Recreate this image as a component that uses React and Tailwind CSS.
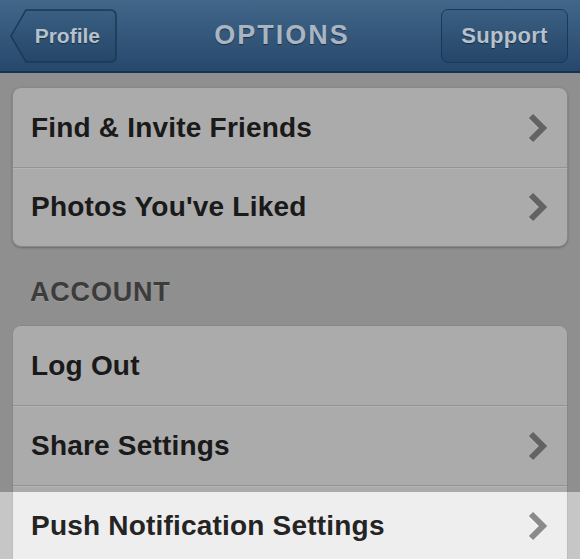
const font = { fontFamily: '"Liberation Sans", Arial, sans-serif' };

function Chevron() {
  return (
    <svg width="20" height="30" viewBox="0 0 20 30" className="shrink-0">
      <polyline points="3,3 15,15 3,27" fill="none" stroke="#f4f4f4" strokeWidth="6" transform="translate(-1,1)" />
      <polyline points="3,3 15,15 3,27" fill="none" stroke="#8a8a8a" strokeWidth="6" />
    </svg>
  );
}

function Row({ label, arrow = true, last = false, h = "h-[80px]" }) {
  return (
    <div className={`${h} flex items-center justify-between pl-[18px] pr-[19px] ${last ? "" : "border-b border-[#cdcdcd] shadow-[0_1px_0_#fafafa]"}`}>
      <span className="text-[28px] font-bold text-[#242424] tracking-[0.2px]">{label}</span>
      {arrow && <Chevron />}
    </div>
  );
}

export default function App() {
  return (
    <div className="w-[580px] h-[559px] overflow-hidden bg-[#c6c6c6]" style={font}>
      {/* Header */}
      <header className="h-[73px] flex items-center justify-between px-[10px] bg-gradient-to-b from-[#426789] to-[#26486c] border-b-2 border-[#15324f]">
        <button className="relative w-[107px] h-[54px] flex items-center justify-end pr-[17px]">
          <svg className="absolute inset-0" width="107" height="54" viewBox="0 0 107 54">
            <defs>
              <linearGradient id="bb" x1="0" y1="0" x2="0" y2="1">
                <stop offset="0" stopColor="#3a5f82" />
                <stop offset="1" stopColor="#254668" />
              </linearGradient>
            </defs>
            <path d="M16 1 H100 Q106 1 106 7 V47 Q106 53 100 53 H16 L1 27 Z" fill="url(#bb)" stroke="#1a3857" strokeWidth="1.5" />
          </svg>
          <span className="relative text-[21px] font-bold text-[#b7c1cd] [text-shadow:0_1px_1px_rgba(0,0,0,0.45)]">Profile</span>
        </button>
        <h1 className="text-[27px] font-bold tracking-[2px] text-[#aab5c3] [text-shadow:0_1px_1px_rgba(0,0,0,0.45)] pl-[6px]">OPTIONS</h1>
        <button className="w-[127px] h-[54px] mr-[2px] rounded-[7px] border-[1.5px] border-[#1a3857] bg-gradient-to-b from-[#3a5f82] to-[#254668] flex items-center justify-center">
          <span className="text-[22px] font-bold tracking-[0.3px] text-[#b7c1cd] [text-shadow:0_1px_1px_rgba(0,0,0,0.45)]">Support</span>
        </button>
      </header>

      {/* Content */}
      <div className="relative px-[12px] pt-[14px]">
        <div className="rounded-[9px] bg-[#eeeeee] border border-[#bdbdbd] shadow-[0_1px_2px_rgba(0,0,0,0.25)]">
          <Row label="Find & Invite Friends" />
          <Row label="Photos You've Liked" last h="h-[78px]" />
        </div>

        <div className="h-[78px] flex items-center pl-[18px] pt-[12px]">
          <span className="text-[27px] font-bold tracking-[0.8px] text-[#545454] [text-shadow:0_1px_0_rgba(255,255,255,0.35)]">ACCOUNT</span>
        </div>

        <div className="rounded-t-[9px] bg-[#eeeeee] border border-[#bdbdbd] border-b-0">
          <Row label="Log Out" arrow={false} />
          <Row label="Share Settings" />
          <Row label="Push Notification Settings" last />
        </div>

        {/* dim overlay, leaving the last row spotlit */}
        <div className="absolute inset-x-0 top-0 h-[419px] bg-black/[0.28] pointer-events-none" />
      </div>
    </div>
  );
}
